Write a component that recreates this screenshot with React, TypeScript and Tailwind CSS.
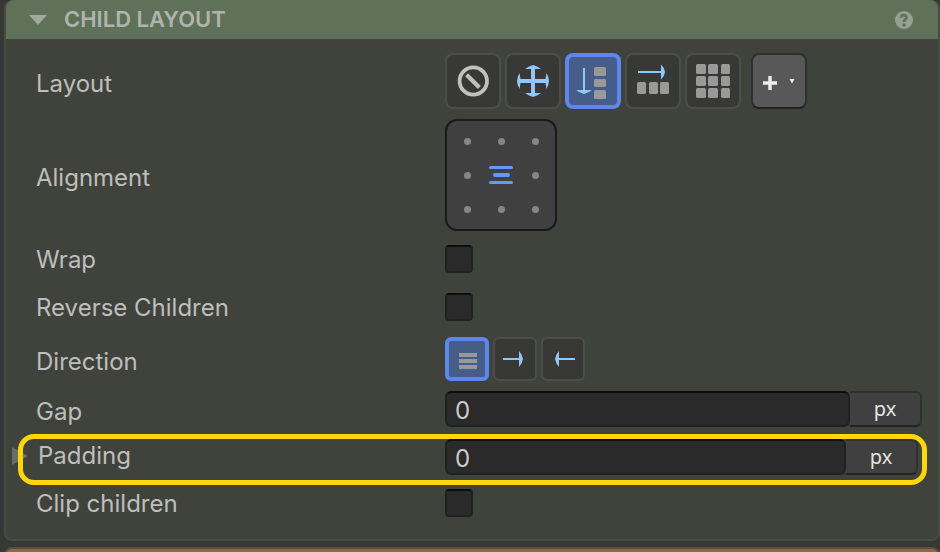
import React, { useState } from 'react'
import clsx from 'clsx'

const LAYOUTS = ['none', 'free', 'column', 'row', 'grid'] as const
const DIRECTIONS = ['inherit', 'ltr', 'rtl'] as const
const ALIGNMENTS = [
  'top left', 'top center', 'top right',
  'middle left', 'middle center', 'middle right',
  'bottom left', 'bottom center', 'bottom right',
]

type LayoutKind = (typeof LAYOUTS)[number]
type DirectionKind = (typeof DIRECTIONS)[number]

function LayoutIcon({ kind }: { kind: LayoutKind }) {
  return (
    <svg viewBox="0 0 56 56" className="h-14 w-14 shrink-0" aria-hidden="true">
      {kind === 'none' && (
        <g fill="none" stroke="#c0c0c0">
          <circle cx="28.3" cy="28" r="13.7" strokeWidth="3.8" />
          <path d="M21.6 21.8L34.4 34.6" strokeWidth="4.2" />
        </g>
      )}
      {kind === 'free' && (
        <path
          fill="#8ec8fb"
          d="M28 12L32 13.6L36 16H30V26H40.5L41.5 20L43.3 24L44 28L43.3 32L41.5 36L40.5 30H30V40H36L32 42.4L28 44L24 42.4L20 40H26V30H15.5L14.5 36L12.7 32L12 28L12.7 24L14.5 20L15.5 26H26V16H20L24 13.6Z"
        />
      )}
      {kind === 'column' && (
        <>
          <path fill="#8ec8fb" d="M18 15H20V37H27L23 39.6L19 41L15 39.6L11 37H18Z" />
          <g fill="#999999">
            <rect x="29" y="14" width="12" height="9" rx="1.5" />
            <rect x="29" y="26" width="12" height="8" rx="1.5" />
            <rect x="29" y="37" width="12" height="9" rx="1.5" />
          </g>
        </>
      )}
      {kind === 'row' && (
        <>
          <path fill="#8ec8fb" d="M13 18H36V11.5L38.8 15L40 19L38.8 23L36 26.5V20H13Z" />
          <g fill="#999999">
            <rect x="12" y="29" width="9" height="12" rx="1.5" />
            <rect x="24" y="29" width="9" height="12" rx="1.5" />
            <rect x="35" y="29" width="9" height="12" rx="1.5" />
          </g>
        </>
      )}
      {kind === 'grid' && (
        <g fill="#999999">
          {[11, 23, 35].map((y) => (
            <React.Fragment key={y}>
              <rect x="11" y={y} width="10" height="10" rx="1.5" />
              <rect x="23" y={y} width="10" height="10" rx="1.5" />
              <rect x="36" y={y} width="9" height="10" rx="1.5" />
            </React.Fragment>
          ))}
        </g>
      )}
    </svg>
  )
}

function DirectionIcon({ kind }: { kind: DirectionKind }) {
  return (
    <svg viewBox="0 0 44 44" className="h-11 w-11 shrink-0" aria-hidden="true">
      {kind === 'inherit' && <path fill="#999999" d="M14 16h18v4H14zM14 22h18v4H14zM14 28h18v4H14z" />}
      {kind === 'ltr' && <path fill="#8ec8fb" d="M10 21H26V14L28.5 17.5L30 22L28.5 26.5L26 30V23H10Z" />}
      {kind === 'rtl' && <path fill="#8ec8fb" d="M34 21H18V14L15.5 17.5L14 22L15.5 26.5L18 30V23H34Z" />}
    </svg>
  )
}

interface RowProps {
  label: string
  htmlFor?: string
  className?: string
  labelClass?: string
  children: React.ReactNode
}

function Row({ label, htmlFor, className, labelClass = 'pt-0.5', children }: RowProps) {
  const Label = htmlFor ? 'label' : 'span'
  return (
    <div className={clsx('grid grid-cols-[409px_minmax(0,1fr)] items-center pl-[30px]', className)}>
      <Label htmlFor={htmlFor} className={clsx('text-2xl leading-8', labelClass)}>{label}</Label>
      {children}
    </div>
  )
}

function Check({ id }: { id: string }) {
  return (
    <input
      id={id}
      type="checkbox"
      className="h-7 w-7 appearance-none rounded-sm border-2 border-[#212121] border-t-[#0d0d0d] bg-[#2a2a2a] checked:bg-[#5b8bf0]"
    />
  )
}

function UnitField({ id, className }: { id: string; className?: string }) {
  const [value, setValue] = useState('0')

  return (
    <div className={clsx('flex h-9', className)}>
      <input
        id={id}
        value={value}
        onChange={(e) => setValue(e.target.value)}
        className="min-w-0 flex-1 rounded-md border-2 border-[#212121] border-t-[#0d0d0d] bg-[#2a2a2a] pl-2 pt-1 text-2xl leading-8 text-[#cccccc] outline-none"
      />
      <button type="button" className="w-[72px] rounded-r-md border-2 border-l-0 border-[#303030] border-b-[#242424] bg-[#404040] font-['Noto_Sans',sans-serif] text-xl leading-6 text-[#e4e4e4]">
        px
      </button>
    </div>
  )
}

export default function App() {
  const [open, setOpen] = useState(true)
  const [layout, setLayout] = useState<LayoutKind>('column')
  const [align, setAlign] = useState('middle center')
  const [direction, setDirection] = useState<DirectionKind>('inherit')

  return (
    <div className="min-h-screen overflow-hidden bg-[#373836] pl-1 font-['Inter',sans-serif] text-[#bebebd]">
      <section className="rounded-lg border-2 border-t-0 border-[#454f41] bg-[#40423c]">
        <header className="flex h-[39px] items-center rounded-t-lg bg-[#5f7158] pl-[23px] pr-[25px]">
          <button type="button" onClick={() => setOpen(!open)} aria-expanded={open} className="flex flex-1 items-center gap-[17px] text-[#afb5ac]">
            <svg viewBox="0 0 18 10" className="h-[10px] w-[18px]" aria-hidden="true">
              <path fill="#a0aa9c" d="M0 0H18L9 10Z" />
            </svg>
            <span className="pb-0.5 text-[22px] font-semibold leading-8">CHILD LAYOUT</span>
          </button>
          <button type="button" aria-label="Help">
            <svg viewBox="0 0 18 18" className="h-[18px] w-[18px]" aria-hidden="true">
              <circle cx="9" cy="9" r="9" fill="#98a092" />
              <path fill="none" stroke="#5f7158" strokeWidth="2.8" d="M6 6.6C6.2 3.2 11.8 3.4 11.4 6.6C11.2 8.4 9 8.4 9 11" />
              <circle cx="9" cy="14" r="1.7" fill="#5f7158" />
            </svg>
          </button>
        </header>

        {open && (
          <div className="pb-4 pt-2">
            <Row label="Layout" className="h-[68px]" labelClass="pt-1.5">
              <div className="flex items-center gap-1">
                {LAYOUTS.map((kind) => (
                  <button
                    key={kind}
                    type="button"
                    aria-label={kind}
                    aria-pressed={layout === kind}
                    onClick={() => setLayout(kind)}
                    className={clsx(
                      'flex h-14 w-14 items-center justify-center rounded-lg',
                      layout === kind ? 'border-4 border-[#5b87ee] bg-[#465d89]' : 'border-2 border-[#4d4d4b] bg-[#383836]'
                    )}
                  >
                    <LayoutIcon kind={kind} />
                  </button>
                ))}
                <button
                  type="button"
                  aria-label="Add layout"
                  className="ml-1.5 flex h-14 w-14 items-center justify-center gap-3 rounded-lg border-2 border-[#303030] border-b-[#212121] bg-[#585858]"
                >
                  <svg viewBox="0 0 14 14" className="mt-1 h-3.5 w-3.5" aria-hidden="true">
                    <path fill="#eeeeee" d="M5.3 0H8.7V5.3H14V8.7H8.7V14H5.3V8.7H0V5.3H5.3Z" />
                  </svg>
                  <svg viewBox="0 0 6 5" className="h-[5px] w-1.5" aria-hidden="true">
                    <path fill="#eeeeee" d="M0.5 0H5.5L3 4.5Z" />
                  </svg>
                </button>
              </div>
            </Row>

            <Row label="Alignment" className="h-[120px]" labelClass="pt-1.5">
              <div className="grid h-28 w-28 grid-cols-[repeat(3,34px)] grid-rows-[repeat(3,34px)] place-content-center rounded-xl border-2 border-[#1a1a1a] bg-[#404040]">
                {ALIGNMENTS.map((spot) => (
                  <button
                    key={spot}
                    type="button"
                    aria-label={spot}
                    aria-pressed={align === spot}
                    onClick={() => setAlign(spot)}
                    className="flex flex-col items-center justify-center gap-1"
                  >
                    {align === spot ? (
                      <>
                        <span className="h-[3px] w-6 rounded-sm bg-[#6499fa]" />
                        <span className="h-1 w-[17px] rounded-sm bg-[#6499fa]" />
                        <span className="h-[3px] w-6 rounded-sm bg-[#6499fa]" />
                      </>
                    ) : (
                      <span className="h-[7px] w-[7px] rounded-full bg-[#868686]" />
                    )}
                  </button>
                ))}
              </div>
            </Row>

            <Row label="Wrap" htmlFor="wrap" className="h-12">
              <Check id="wrap" />
            </Row>

            <Row label="Reverse Children" htmlFor="reverse" className="h-12">
              <Check id="reverse" />
            </Row>

            <Row label="Direction" className="h-14" labelClass="pt-1.5">
              <div className="flex gap-1">
                {DIRECTIONS.map((kind) => (
                  <button
                    key={kind}
                    type="button"
                    aria-label={kind}
                    aria-pressed={direction === kind}
                    onClick={() => setDirection(kind)}
                    className={clsx(
                      'flex h-11 w-11 items-center justify-center rounded-md',
                      direction === kind ? 'border-4 border-[#5b87ee] bg-[#465d89]' : 'border-2 border-[#4d4d4b] bg-[#383836]'
                    )}
                  >
                    <DirectionIcon kind={kind} />
                  </button>
                ))}
              </div>
            </Row>

            <Row label="Gap" htmlFor="gap" className="h-11" labelClass="pt-1.5">
              <UnitField id="gap" className="mr-4" />
            </Row>

            {/* Padding row with its highlight ring */}
            <div className="relative">
              <svg viewBox="0 0 16 18" className="absolute left-1.5 top-4 h-[18px] w-4" aria-hidden="true">
                <path fill="#6c6d6a" d="M0 0L16 9L0 18Z" />
              </svg>
              <Row label="Padding" htmlFor="padding" className="h-[52px]" labelClass="pb-0.5 pl-0.5">
                <UnitField id="padding" className="mr-5" />
              </Row>
              <div className="pointer-events-none absolute -bottom-0.5 left-3 right-[11px] top-[3px] rounded-2xl border-[5px] border-[#ffd60a]" />
            </div>

            <Row label="Clip children" htmlFor="clip" className="h-10">
              <Check id="clip" />
            </Row>
          </div>
        )}
      </section>

      {/* Top edge of the next panel */}
      <section className="mt-1.5 h-8 rounded-t-lg border-2 border-[#5c5040] bg-[#846c4b]" />
    </div>
  )
}
